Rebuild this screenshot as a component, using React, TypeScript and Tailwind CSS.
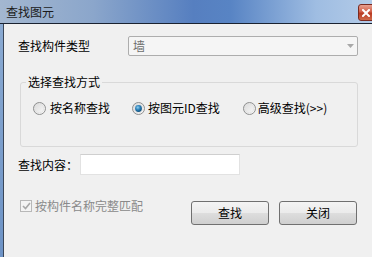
import React from "react";

function Radio({ checked }: { checked?: boolean }) {
  return (
    <svg width="13" height="13" viewBox="0 0 13 13" className="shrink-0">
      <defs>
        <linearGradient id={checked ? "rg1" : "rg0"} x1="0" y1="0" x2="1" y2="1">
          <stop offset="0" stopColor="#d8d8d8" />
          <stop offset="1" stopColor="#fbfbfb" />
        </linearGradient>
        <radialGradient id="dot" cx="0.4" cy="0.35" r="0.7">
          <stop offset="0" stopColor="#8fd0f0" />
          <stop offset="0.5" stopColor="#2a7fb8" />
          <stop offset="1" stopColor="#0c4a74" />
        </radialGradient>
      </defs>
      <circle cx="6.5" cy="6.5" r="6" fill={`url(#${checked ? "rg1" : "rg0"})`} stroke="#8e8f8f" strokeWidth="1" />
      <circle cx="6.5" cy="6.5" r="4.3" fill="none" stroke="#e2e2e2" strokeWidth="0.8" />
      {checked && <circle cx="6.5" cy="6.5" r="3.4" fill="url(#dot)" />}
    </svg>
  );
}

export default function App() {
  const font = "font-['Noto_Sans_CJK_SC','Noto_Sans',sans-serif]";
  return (
    <div className={`w-[372px] h-[257px] overflow-hidden bg-[#f0f0f0] text-[12px] leading-[14px] text-black ${font}`}>
      {/* Title bar */}
      <div className="h-[23px] flex items-start bg-[linear-gradient(to_right,#a3b7d0_0%,#8ba6cb_25%,#567fc0_52%,#5884c4_62%,#9fbde2_85%,#b3cbe8_100%)]">
        <div className="pl-[6px] pt-[5px] text-[#1b1b1b] text-[12px] leading-[14px]">查找图元</div>
        <div className="ml-auto mt-[4px] w-[17px] h-[17px] mr-[-3px] rounded-l-[3px] border border-[#7a2a20] bg-[linear-gradient(to_bottom,#e8a090_0%,#d0604a_45%,#b83a22_55%,#d06a4a_100%)] flex items-center justify-start pl-[3px]">
          <svg width="8" height="8" viewBox="0 0 8 8">
            <path d="M1 1 L7 7 M7 1 L1 7" stroke="#ffffff" strokeWidth="2" strokeLinecap="square" />
          </svg>
        </div>
      </div>
      <div className="h-[1px] bg-[#1a2230]" />
      {/* Body */}
      <div className="flex h-[233px]">
        <div className="w-[3px] bg-[linear-gradient(to_bottom,#8aaad2,#6d93c6)]" />
        <div className="w-[1px] bg-[#3a4658]" />
        <div className="flex-1 flex flex-col pl-[14px]">
          {/* Row 1 */}
          <div className="mt-[12px] flex items-center h-[20px]">
            <div className="w-[110px]">查找构件类型</div>
            <div className="w-[230px] h-[20px] border border-[#adadad] rounded-[2px] bg-[#f5f5f5] flex items-center pl-[4px] text-[#6d6d6d]">
              <span>墙</span>
              <svg className="ml-auto mr-[3px]" width="7" height="4" viewBox="0 0 7 4">
                <path d="M0 0 L7 0 L3.5 4 Z" fill="#a8a8a8" />
              </svg>
            </div>
          </div>
          {/* Group */}
          <fieldset className="mt-[19px] ml-[2px] w-[338px] h-[72px] border border-[#d9d9d9] rounded-[3px] px-0 pt-0 pb-0">
            <legend className="ml-[5px] px-[2px] leading-[14px]">选择查找方式</legend>
            <div className="mt-[12px] flex items-center h-[14px] pl-[12px]">
              <div className="flex items-center gap-[4px]">
                <Radio />
                <span>按名称查找</span>
              </div>
              <div className="flex items-center gap-[3px] ml-[22px]">
                <Radio checked />
                <span>按图元ID查找</span>
              </div>
              <div className="flex items-center gap-[2px] ml-[23px]">
                <Radio />
                <span>高级查找(&gt;&gt;)</span>
              </div>
            </div>
          </fieldset>
          {/* Row 3 */}
          <div className="mt-[7px] flex items-center h-[21px]">
            <div className="w-[62px]">查找内容：</div>
            <div className="w-[160px] h-[21px] border border-[#e2e2e2] border-t-[#cfcfcf] bg-white" />
          </div>
          {/* Row 4 */}
          <div className="mt-[24px] flex items-start">
            <div className="flex items-center gap-[3px] ml-[2px] text-[#8a8a8a]">
              <div className="w-[12px] h-[12px] border border-[#b8b8b8] bg-[#f4f4f4] flex items-center justify-center">
                <svg width="9" height="8" viewBox="0 0 9 8">
                  <path d="M1 4 L3.5 6.5 L8 1" stroke="#a8a8a8" strokeWidth="1.6" fill="none" />
                </svg>
              </div>
              <span>按构件名称完整匹配</span>
            </div>
            <div className="ml-auto mr-[15px] mt-[2px] flex gap-[10px]">
              <button className="w-[78px] h-[24px] border border-[#707070] rounded-[3px] bg-[linear-gradient(to_bottom,#f4f4f4_0%,#ebebeb_48%,#dddddd_52%,#cfcfcf_100%)] text-[12px] leading-[14px]">
                查找
              </button>
              <button className="w-[78px] h-[24px] border border-[#707070] rounded-[3px] bg-[linear-gradient(to_bottom,#f4f4f4_0%,#ebebeb_48%,#dddddd_52%,#cfcfcf_100%)] text-[12px] leading-[14px]">
                关闭
              </button>
            </div>
          </div>
        </div>
      </div>
    </div>
  );
}
